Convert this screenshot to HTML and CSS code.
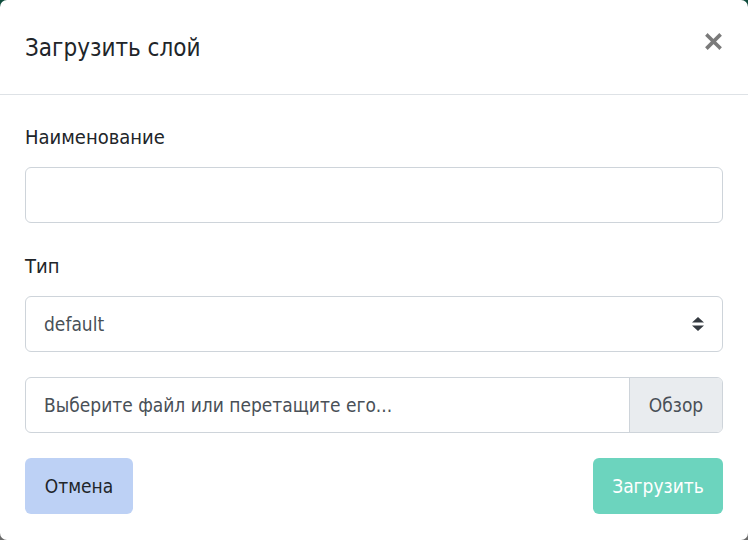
FILE: index.html
```html
<!DOCTYPE html>
<html lang="ru">
<head>
<meta charset="utf-8">
<link rel="stylesheet" href="styles.css">
</head>
<body>
<div class="modal">
  <div class="modal-header">
    <h5 class="modal-title">Загрузить слой</h5>
    <button class="close" type="button" aria-label="Close">
      <svg viewBox="0 0 16 16" width="17" height="17"><path d="M2.5 2.5 L13.5 13.5 M13.5 2.5 L2.5 13.5" stroke="#7a7a7a" stroke-width="3.4" stroke-linecap="square" fill="none"/></svg>
    </button>
  </div>
  <div class="modal-body">
    <div class="group group-name">
      <label class="label">Наименование</label>
      <div class="control"></div>
    </div>
    <div class="group group-type">
      <label class="label">Тип</label>
      <div class="control select">
        <span>default</span>
        <svg class="arrows" viewBox="0 0 12 14" width="12" height="14"><path d="M6 0 L12 5.5 L0 5.5 Z M0 8.5 L12 8.5 L6 14 Z" fill="#343a40"/></svg>
      </div>
    </div>
    <div class="group group-file">
      <div class="control file">
        <span class="file-label">Выберите файл или перетащите его...</span>
        <span class="browse">Обзор</span>
      </div>
    </div>
    <div class="footer">
      <button class="btn btn-cancel" type="button">Отмена</button>
      <button class="btn btn-upload" type="button">Загрузить</button>
    </div>
  </div>
</div>
</body>
</html>
```
FILE: styles.css
```css
html, body {
  margin: 0;
  height: 100%;
}
body {
  background: linear-gradient(180deg, #0f4d3d 0%, #2f4a42 45%, #6b6b6b 100%);
  font-family: "Liberation Sans Narrow", "DejaVu Sans Condensed", "Liberation Sans", sans-serif;
  color: #212529;
}
.modal {
  background: #fff;
  height: 540px;
  border-radius: 7px;
  display: flex;
  flex-direction: column;
  box-sizing: border-box;
}
.modal-header {
  height: 95px;
  box-sizing: border-box;
  border-bottom: 1px solid #dee2e6;
  display: flex;
  align-items: center;
  justify-content: space-between;
  padding: 0 25px 0 25px;
}
.modal-title {
  margin: 0;
  font-size: 24px;
  font-weight: 400;
  line-height: 1.5;
  color: #212529;
  position: relative;
  top: 1px;
}
.close {
  background: none;
  border: 0;
  padding: 0;
  width: 17px;
  height: 17px;
  margin-right: 1px;
  position: relative;
  top: -6px;
  display: flex;
}
.modal-body {
  padding: 27px 25px 26px;
  display: flex;
  flex-direction: column;
}
.label {
  display: block;
  font-size: 20px;
  line-height: 30px;
  margin-bottom: 15px;
  color: #212529;
}
.group-name { margin-bottom: 28px; }
.group-type { margin-bottom: 25px; }
.group-file { margin-bottom: 25px; }
.control {
  height: 56px;
  box-sizing: border-box;
  border: 1px solid #ced4da;
  border-radius: 6px;
  background: #fff;
  font-size: 19px;
  color: #495057;
}
.select {
  display: flex;
  align-items: center;
  justify-content: space-between;
  padding: 0 18px 0 18px;
}
.arrows { display: block; }
.file {
  display: flex;
  align-items: stretch;
  overflow: hidden;
}
.file-label {
  flex: 1;
  display: flex;
  align-items: center;
  padding-left: 18px;
}
.browse {
  width: 93px;
  box-sizing: border-box;
  background: #e9ecef;
  border-left: 1px solid #ced4da;
  display: flex;
  align-items: center;
  justify-content: center;
  color: #495057;
}
.footer {
  display: flex;
  justify-content: space-between;
}
.btn {
  height: 56px;
  border: 0;
  border-radius: 6px;
  font-family: inherit;
  font-size: 19px;
  padding: 0;
  cursor: pointer;
}
.btn-cancel {
  width: 108px;
  background: #bdd1f5;
  color: #212529;
}
.btn-upload {
  width: 130px;
  background: #6cd4be;
  color: #fff;
}
```
